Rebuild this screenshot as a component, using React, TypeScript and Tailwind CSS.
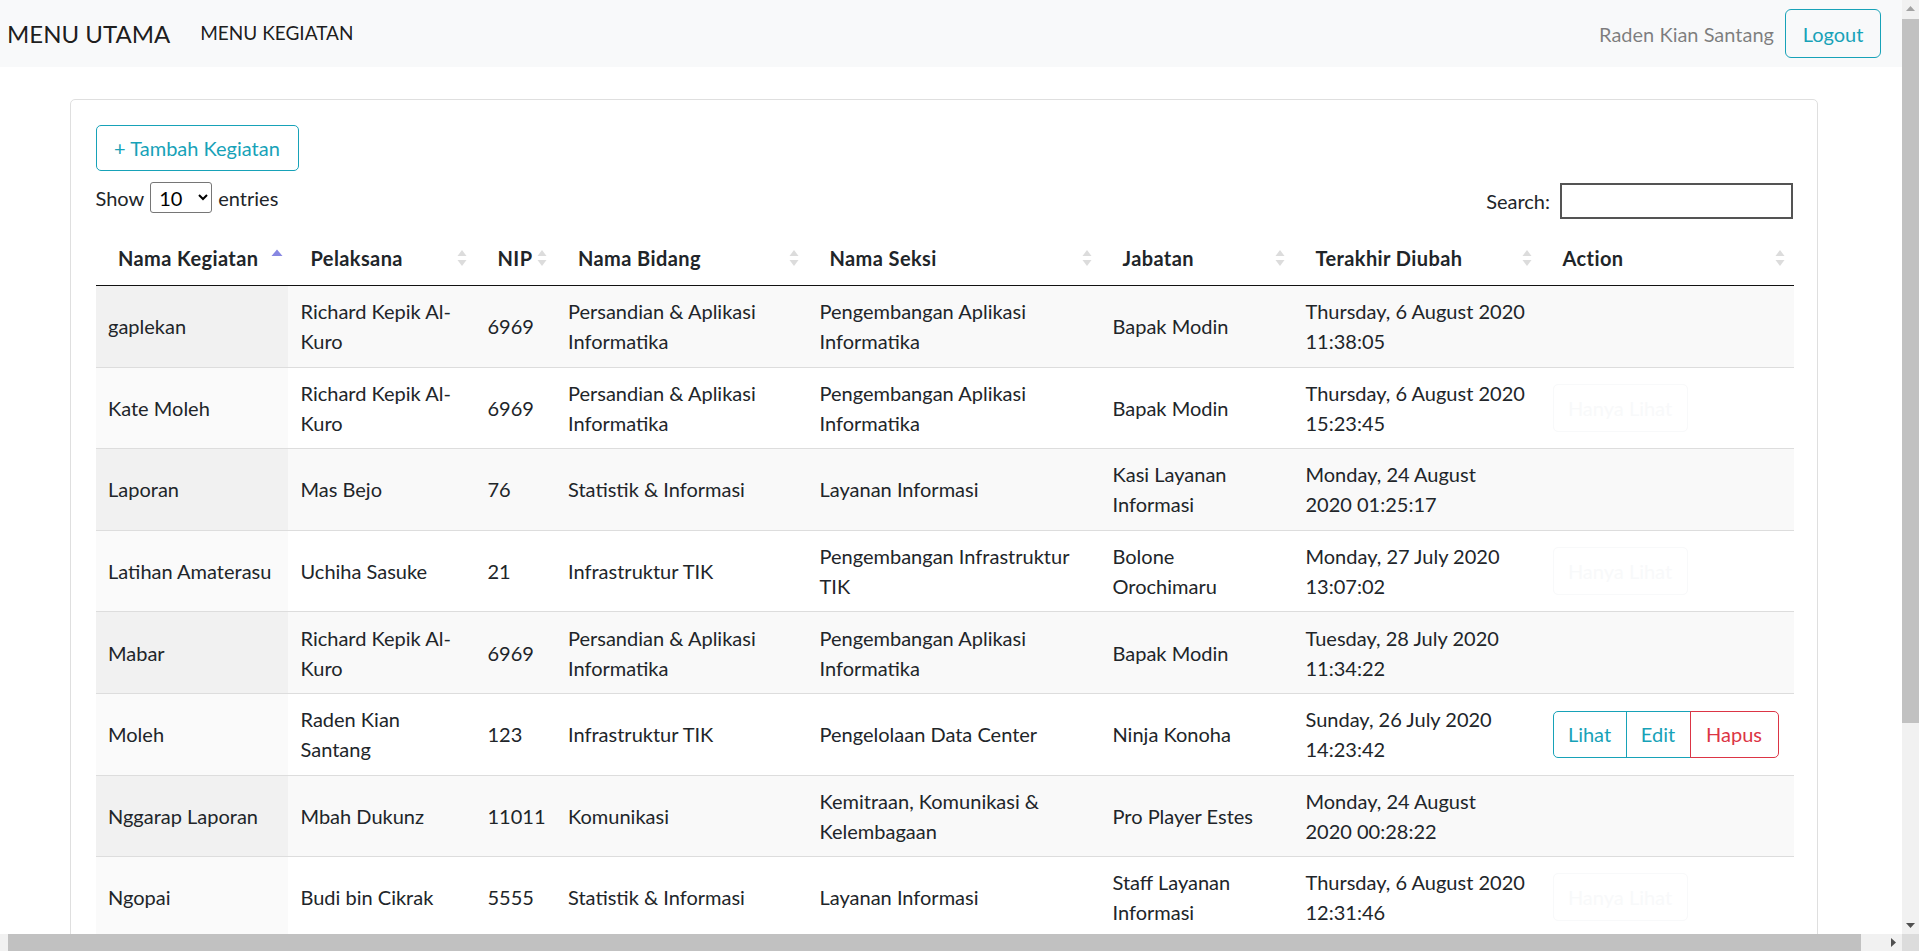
import React from "react";

type Row = {
  kegiatan: string[];
  pelaksana: string[];
  nip: string;
  bidang: string[];
  seksi: string[];
  jabatan: string[];
  diubah: string[];
  action: "none" | "view" | "full";
};

const rows: Row[] = [
  {
    kegiatan: ["gaplekan"],
    pelaksana: ["Richard Kepik Al-", "Kuro"],
    nip: "6969",
    bidang: ["Persandian & Aplikasi", "Informatika"],
    seksi: ["Pengembangan Aplikasi", "Informatika"],
    jabatan: ["Bapak Modin"],
    diubah: ["Thursday, 6 August 2020", "11:38:05"],
    action: "none",
  },
  {
    kegiatan: ["Kate Moleh"],
    pelaksana: ["Richard Kepik Al-", "Kuro"],
    nip: "6969",
    bidang: ["Persandian & Aplikasi", "Informatika"],
    seksi: ["Pengembangan Aplikasi", "Informatika"],
    jabatan: ["Bapak Modin"],
    diubah: ["Thursday, 6 August 2020", "15:23:45"],
    action: "view",
  },
  {
    kegiatan: ["Laporan"],
    pelaksana: ["Mas Bejo"],
    nip: "76",
    bidang: ["Statistik & Informasi"],
    seksi: ["Layanan Informasi"],
    jabatan: ["Kasi Layanan", "Informasi"],
    diubah: ["Monday, 24 August", "2020 01:25:17"],
    action: "none",
  },
  {
    kegiatan: ["Latihan Amaterasu"],
    pelaksana: ["Uchiha Sasuke"],
    nip: "21",
    bidang: ["Infrastruktur TIK"],
    seksi: ["Pengembangan Infrastruktur", "TIK"],
    jabatan: ["Bolone", "Orochimaru"],
    diubah: ["Monday, 27 July 2020", "13:07:02"],
    action: "view",
  },
  {
    kegiatan: ["Mabar"],
    pelaksana: ["Richard Kepik Al-", "Kuro"],
    nip: "6969",
    bidang: ["Persandian & Aplikasi", "Informatika"],
    seksi: ["Pengembangan Aplikasi", "Informatika"],
    jabatan: ["Bapak Modin"],
    diubah: ["Tuesday, 28 July 2020", "11:34:22"],
    action: "none",
  },
  {
    kegiatan: ["Moleh"],
    pelaksana: ["Raden Kian", "Santang"],
    nip: "123",
    bidang: ["Infrastruktur TIK"],
    seksi: ["Pengelolaan Data Center"],
    jabatan: ["Ninja Konoha"],
    diubah: ["Sunday, 26 July 2020", "14:23:42"],
    action: "full",
  },
  {
    kegiatan: ["Nggarap Laporan"],
    pelaksana: ["Mbah Dukunz"],
    nip: "11011",
    bidang: ["Komunikasi"],
    seksi: ["Kemitraan, Komunikasi &", "Kelembagaan"],
    jabatan: ["Pro Player Estes"],
    diubah: ["Monday, 24 August", "2020 00:28:22"],
    action: "none",
  },
  {
    kegiatan: ["Ngopai"],
    pelaksana: ["Budi bin Cikrak"],
    nip: "5555",
    bidang: ["Statistik & Informasi"],
    seksi: ["Layanan Informasi"],
    jabatan: ["Staff Layanan", "Informasi"],
    diubah: ["Thursday, 6 August 2020", "12:31:46"],
    action: "view",
  },
];

const columns = [
  "Nama Kegiatan",
  "Pelaksana",
  "NIP",
  "Nama Bidang",
  "Nama Seksi",
  "Jabatan",
  "Terakhir Diubah",
  "Action",
];

const SortBoth = () => (
  <svg width="10" height="18" viewBox="0 0 10 18" className="shrink-0">
    <path d="M5 1 L9.5 7 L0.5 7 Z" fill="#dcdcdc" />
    <path d="M0.5 11 L9.5 11 L5 17 Z" fill="#dcdcdc" />
  </svg>
);

const SortAsc = () => (
  <svg width="12" height="18" viewBox="0 0 12 18" className="-mr-[3px] shrink-0">
    <path d="M6 0.5 L11.5 7 L0.5 7 Z" fill="#8787e2" />
  </svg>
);

const Lines = ({ lines }: { lines: string[] }) => (
  <>
    {lines.map((l, i) => (
      <div key={i} className="whitespace-nowrap">
        {l}
      </div>
    ))}
  </>
);

const ActionCell = ({ kind }: { kind: Row["action"] }) => {
  if (kind === "view") {
    return (
      <button className="h-[48px] w-[135px] rounded-[5px] border border-[#f8f9fa] text-[20px] text-[#f8f9fa]">
        Hanya Lihat
      </button>
    );
  }
  if (kind === "full") {
    return (
      <div className="flex h-[47px]">
        <button className="w-[74px] rounded-l-[5px] border border-[#17a2b8] text-[20px] text-[#17a2b8]">
          Lihat
        </button>
        <button className="-ml-px w-[65px] border border-[#17a2b8] text-[20px] text-[#17a2b8]">
          Edit
        </button>
        <button className="-ml-px w-[89px] rounded-r-[5px] border border-[#dc3545] text-[20px] text-[#dc3545]">
          Hapus
        </button>
      </div>
    );
  }
  return null;
};

const VScrollbar = () => (
  <div className="flex w-[17px] shrink-0 flex-col bg-[#f1f1f1]">
    <div className="flex h-[17px] items-center justify-center">
      <svg width="9" height="5" viewBox="0 0 9 5">
        <path d="M4.5 0 L9 5 L0 5 Z" fill="#a3a3a3" />
      </svg>
    </div>
    <div className="mt-[2px] h-[704px] bg-[#c1c1c1]" />
    <div className="flex-1" />
    <div className="flex h-[17px] items-center justify-center">
      <svg width="9" height="5" viewBox="0 0 9 5">
        <path d="M0 0 L9 0 L4.5 5 Z" fill="#505050" />
      </svg>
    </div>
  </div>
);

const HScrollbar = () => (
  <div className="flex h-[17px] shrink-0 bg-[#f1f1f1]">
    <div className="ml-[8px] w-[1853px] bg-[#c1c1c1]" />
    <div className="flex-1" />
    <div className="flex w-[17px] items-center justify-center">
      <svg width="5" height="9" viewBox="0 0 5 9">
        <path d="M0 0 L5 4.5 L0 9 Z" fill="#505050" />
      </svg>
    </div>
    <div className="w-[17px] bg-[#dcdcdc]" />
  </div>
);

export default function App() {
  const widths = [
    "w-[192.5px]",
    "w-[187px]",
    "w-[80.5px]",
    "w-[251.5px]",
    "w-[293px]",
    "w-[193px]",
    "w-[247px]",
    "w-[253.5px]",
  ];

  return (
    <div className="flex h-[951px] w-[1919px] flex-col overflow-hidden bg-white font-['Lato',sans-serif] text-[#212529]">
      <div className="flex min-h-0 flex-1">
        <main className="min-w-0 flex-1 overflow-hidden">
          <nav className="flex h-[67px] items-center bg-[#f8f9fa] pl-[7px] pr-[21px]">
            <span className="mr-[30px] text-[24px] text-black/90">MENU UTAMA</span>
            <span className="text-[19px] text-black/90">MENU KEGIATAN</span>
            <div className="ml-auto flex items-center gap-[11px]">
              <span className="text-[20px] text-black/50">Raden Kian Santang</span>
              <button className="h-[49px] w-[96px] rounded-[6px] border border-[#17a2b8] text-[20px] text-[#17a2b8]">
                Logout
              </button>
            </div>
          </nav>

          <div className="ml-[70px] mt-[32px] w-[1748px] rounded-[5px] border border-[#dfdfdf] pb-[25px] pl-[24.5px] pr-[24px] pt-[25px]">
            <button className="h-[46px] w-[203px] rounded-[5px] border border-[#17a2b8] text-[20px] text-[#17a2b8]">
              + Tambah Kegiatan
            </button>

            <div className="mt-[11px] flex items-start justify-between text-[20px]">
              <div className="flex h-[31px] items-center">
                <span>Show</span>
                <select className="mx-[6px] h-[31px] w-[62px] rounded-[3px] border border-[#767676] bg-white pl-[4px] text-[20px] text-black">
                  <option>10</option>
                  <option>25</option>
                  <option>50</option>
                  <option>100</option>
                </select>
                <span>entries</span>
              </div>
              <div className="mt-[1px] flex h-[36px] items-center">
                <span className="mr-[10px]">Search:</span>
                <input className="h-[36px] w-[233px] border-2 border-[#545454] bg-white px-[4px] text-[20px] outline-none" />
              </div>
            </div>

            <table className="mt-[11px] w-[1698px] table-fixed border-collapse text-[20px] leading-[30px]">
              <colgroup>
                {widths.map((w, i) => (
                  <col key={i} className={w} />
                ))}
              </colgroup>
              <thead>
                <tr>
                  {columns.map((c, i) => (
                    <th
                      key={c}
                      className="border-b border-[#111] py-[12.5px] pl-[22.5px] pr-[8.5px] text-left font-bold"
                    >
                      <div className="flex items-center justify-between">
                        <span className="whitespace-nowrap tracking-[0.4px]">{c}</span>
                        {i === 0 ? <SortAsc /> : <SortBoth />}
                      </div>
                    </th>
                  ))}
                </tr>
              </thead>
              <tbody>
                {rows.map((r, ri) => {
                  const odd = ri % 2 === 0;
                  const rowBg = odd ? "bg-[#f9f9f9]" : "bg-white";
                  const firstBg = odd ? "bg-[#f1f1f1]" : "bg-[#fafafa]";
                  const td = `px-[12.5px] py-[10.3px] align-middle ${ri > 0 ? "border-t border-[#ddd]" : ""}`;
                  return (
                    <tr key={ri} className={rowBg}>
                      <td className={`${td} ${firstBg}`}>
                        <Lines lines={r.kegiatan} />
                      </td>
                      <td className={td}>
                        <Lines lines={r.pelaksana} />
                      </td>
                      <td className={td}>{r.nip}</td>
                      <td className={td}>
                        <Lines lines={r.bidang} />
                      </td>
                      <td className={td}>
                        <Lines lines={r.seksi} />
                      </td>
                      <td className={td}>
                        <Lines lines={r.jabatan} />
                      </td>
                      <td className={td}>
                        <Lines lines={r.diubah} />
                      </td>
                      <td className={td}>
                        <ActionCell kind={r.action} />
                      </td>
                    </tr>
                  );
                })}
              </tbody>
            </table>
          </div>
        </main>
        <VScrollbar />
      </div>
      <HScrollbar />
    </div>
  );
}
